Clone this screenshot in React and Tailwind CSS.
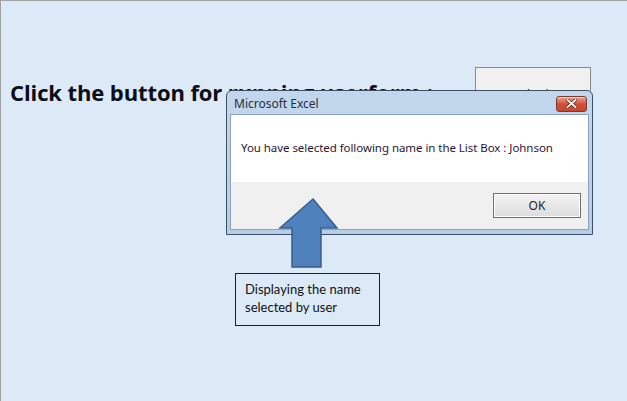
import React from 'react';

// Excel sheet with a userform button, a MsgBox on top and a callout arrow
function CloseButton() {
  return (
    <div className="w-[31px] h-[16px] rounded-[3px] border border-[#7a3a30] bg-gradient-to-b from-[#e9a294] via-[#d0513b] to-[#c8452f] flex items-center justify-center shadow-[inset_0_1px_0_rgba(255,255,255,0.5)]">
      <svg width="11" height="9" viewBox="0 0 11 9">
        <path d="M1.5 1 L9.5 8 M9.5 1 L1.5 8" stroke="#5a1a10" strokeWidth="3.2" strokeLinecap="square" />
        <path d="M1.5 1 L9.5 8 M9.5 1 L1.5 8" stroke="#ffffff" strokeWidth="1.8" strokeLinecap="square" />
      </svg>
    </div>
  );
}

function MsgBox() {
  return (
    <div className="absolute left-[225px] top-[89px] w-[367px] h-[145px] rounded-t-[6px] border border-[#3c4f66] bg-gradient-to-b from-[#c3d7ec] to-[#b6cde6] flex flex-col px-[3px] pb-[4px] font-['Noto_Sans',sans-serif]">
      <div className="h-[23px] flex items-center justify-between pl-[4px] pr-[2px] pt-[2px]">
        <span className="text-[12px] text-[#1e2f45]">Microsoft Excel</span>
        <CloseButton />
      </div>
      <div className="flex-1 flex flex-col border border-[#8ba3c0]">
        <div className="h-[67px] bg-white flex items-center pl-[10px] pb-[2px]">
          <span className="text-[11.5px] text-[#2a1538] tracking-[-0.05px]">
            You have selected following name in the List Box : Johnson
          </span>
        </div>
        <div className="flex-1 bg-[#f0f0f0] flex items-start justify-end pt-[11px] pr-[7px]">
          <div className="w-[88px] h-[25px] border border-[#707070] bg-gradient-to-b from-[#f4f4f4] to-[#dcdcdc] flex items-center justify-center shadow-[inset_0_0_0_1px_#ffffff]">
            <span className="text-[12px] text-[#222]">OK</span>
          </div>
        </div>
      </div>
    </div>
  );
}

function UpArrow() {
  return (
    <svg className="absolute left-[277px] top-[196px]" width="62" height="72" viewBox="0 0 62 72">
      <path d="M35 2 L59 31 L43 31 L43 70 L14 70 L14 31 L2 31 Z" fill="#4f81bd" stroke="#385d8a" strokeWidth="1.5" strokeLinejoin="miter" />
    </svg>
  );
}

export default function App() {
  return (
    <div className="relative w-[627px] h-[401px] overflow-hidden bg-[#dce9f6] border-l border-t border-[#a0a0a0] font-['Lato',sans-serif]">
      <div className="pt-[76px] pl-[9px]">
        <h1 className="text-[22px] font-bold text-[#0c0c14] leading-[30px] whitespace-nowrap font-['Open_Sans',sans-serif] tracking-[-0.1px]">
          Click the button for running userform :
        </h1>
      </div>

      <div className="absolute left-[474px] top-[66px] w-[116px] h-[40px] bg-[#f0f0f0] border border-[#8a8a8a] flex justify-center pt-[18px]">
        <span className="text-[12px] text-[#111] font-['Noto_Sans',sans-serif]">Submit</span>
      </div>

      <MsgBox />
      <UpArrow />

      <div className="absolute left-[234px] top-[272px] w-[145px] h-[53px] border border-[#1e1e1e] bg-[#dce9f6] pl-[9px] pt-[6px]">
        <p className="text-[13px] leading-[18px] text-[#111]">
          Displaying the name<br />selected by user
        </p>
      </div>
    </div>
  );
}
